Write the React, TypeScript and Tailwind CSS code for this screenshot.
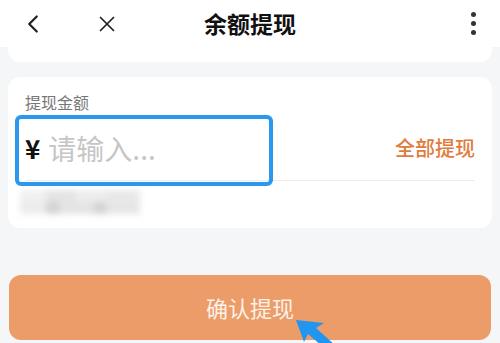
import { ChevronLeft, X } from "lucide-react";

const font = { fontFamily: '"Noto Sans CJK SC", "Noto Sans", sans-serif' };

export default function App() {
  return (
    <div className="relative h-[343px] w-[500px] overflow-hidden bg-[#f5f6f8]" style={font}>
      {/* 顶部栏 */}
      <div className="grid h-[47px] grid-cols-[1fr_auto_1fr] items-center bg-white px-[18px]">
        <div className="flex items-center">
          <ChevronLeft className="h-[30px] w-[30px] text-[#222]" strokeWidth={1.8} />
          <X className="ml-[46px] h-[26px] w-[26px] text-[#222]" strokeWidth={1.6} />
        </div>
        <div className="text-center text-[23px] font-bold text-[#111]">余额提现</div>
        <div className="flex justify-end pr-[2px]">
          <div className="flex w-[14px] flex-col items-center gap-[4px]">
            <span className="h-[5px] w-[5px] rounded-full bg-[#333]" />
            <span className="h-[5px] w-[5px] rounded-full bg-[#333]" />
            <span className="h-[5px] w-[5px] rounded-full bg-[#333]" />
          </div>
        </div>
      </div>
      <div className="mx-[8px] h-[15px] rounded-b-xl bg-white" />

      {/* 金额卡片 */}
      <div className="relative mx-[8px] mt-[15px] h-[151px] rounded-xl bg-white px-[17px] pt-[14px]">
        <div className="text-[16px] leading-[22px] text-[#777]">提现金额</div>
        <div className="mt-[2px] flex h-[66px] items-center border-b border-[#ececec]">
          <span className="text-[26px] font-bold text-[#111]">¥</span>
          <span className="ml-[8px] text-[28px] text-[#c6c6c6]">请输入...</span>
          <span className="ml-auto text-[20px] font-medium text-[#e07b3c]">全部提现</span>
        </div>
        <div className="-ml-[5px] mt-[9px] flex h-[26px] w-[120px] flex-col blur-[3px]">
          <div className="flex h-[12px]">
            <span className="w-[26px] bg-[#f0f0f0]" />
            <span className="w-[30px] bg-[#e4e4e4]" />
            <span className="w-[30px] bg-[#ededed]" />
            <span className="w-[34px] bg-[#e8e8e8]" />
          </div>
          <div className="flex h-[12px]">
            <span className="w-[26px] bg-[#ececec]" />
            <span className="w-[14px] bg-[#d4d4d4]" />
            <span className="w-[34px] bg-[#e4e4e4]" />
            <span className="w-[12px] bg-[#d2d2d2]" />
            <span className="w-[34px] bg-[#e6e6e6]" />
          </div>
        </div>
        {/* 标注框 */}
        <div className="absolute left-[7px] top-[38px] h-[71px] w-[258px] rounded-[6px] border-[4px] border-[#2a98ee]" />
      </div>

      {/* 确认按钮 */}
      <div className="mx-[9px] mt-[47px] flex h-[65px] items-center justify-center rounded-xl bg-[#eb9c69] text-[22px] text-[#fdf1e8]">
        确认提现
      </div>

      {/* 指针箭头 */}
      <svg className="absolute left-[292px] top-[316px]" width="60" height="30" viewBox="0 0 60 30">
        <path d="M4 4 L32 7 L24 12 L44 30 L30 30 L16 18 L12 26 Z" fill="#2196f0" />
      </svg>
    </div>
  );
}
